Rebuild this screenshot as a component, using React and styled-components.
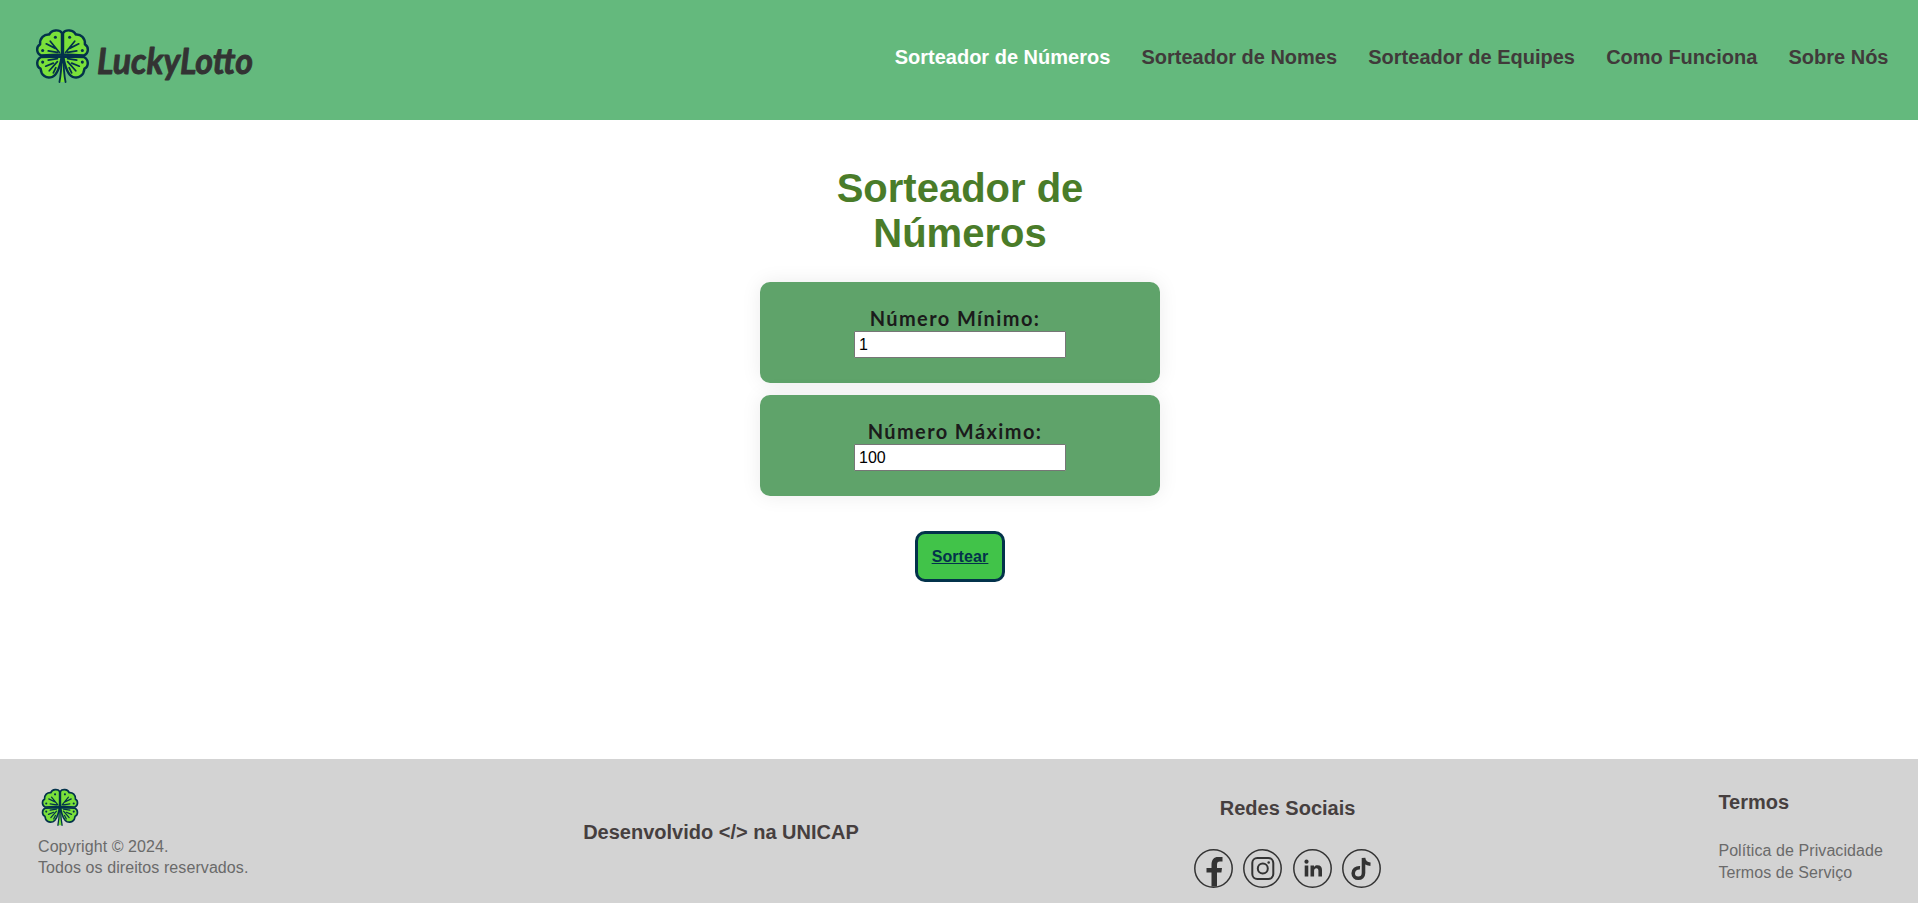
import React from "react";
import styled, { createGlobalStyle } from "styled-components";

const GlobalStyle = createGlobalStyle`
  * { box-sizing: border-box; }
  html, body { margin: 0; padding: 0; }
  body { font-family: Arial, "Liberation Sans", sans-serif; background: #fff; overflow: hidden; }
  h1, h3, p { margin: 0; }
`;

const Page = styled.div`
  display: flex;
  flex-direction: column;
  height: 903px;
`;

const Header = styled.header`
  display: flex;
  justify-content: space-between;
  height: 120px;
  flex: none;
  background: #64b97d;
  padding: 0 29.5px 0 35px;
`;

const Brand = styled.div`
  display: flex;
  align-items: flex-start;
  padding-top: 28px;
  gap: 6px;
`;

const Wordmark = styled.svg`
  display: block;
  width: 170px;
  height: 70px;
  overflow: visible;
  fill: #333;
  stroke: #333;
  stroke-width: 0.9;
  stroke-linejoin: round;
  font-family: Lato, "Liberation Sans", sans-serif;
  font-style: italic;
  font-weight: 700;
  font-size: 36px;
`;

const Nav = styled.nav`
  display: flex;
  gap: 31.2px;
  padding-top: 46px;
`;

const NavLink = styled.a`
  font-size: 20px;
  line-height: 23px;
  font-weight: 700;
  white-space: nowrap;
  color: ${(p) => (p.$active ? "#fff" : "#403a3a")};
`;

const Main = styled.main`
  flex: 1;
  display: flex;
  flex-direction: column;
  align-items: center;
  padding: 46px 0 0 2px;
`;

const Title = styled.h1`
  width: 320px;
  text-align: center;
  font-size: 40px;
  line-height: 45px;
  color: #4a7c29;
  margin-bottom: 26px;
`;

const Card = styled.section`
  width: 400px;
  height: 101px;
  margin-bottom: 12px;
  border-radius: 10px;
  background: #5fa36a;
  box-shadow: 0 0 20px rgba(0, 0, 0, 0.08);
  display: flex;
  flex-direction: column;
  align-items: center;
  padding-top: 23px;
`;

const Label = styled.label`
  font-family: Lato, sans-serif;
  font-size: 20px;
  font-weight: 700;
  line-height: 26px;
  letter-spacing: 1.4px;
  margin-right: 10px;
  color: #1b1b1b;
`;

const Field = styled.input`
  width: 212px;
  height: 27px;
  padding: 1px 4px;
  border: 1px solid #767676;
  border-radius: 1px;
  background: #fff;
  font: 16px "Liberation Sans", sans-serif;
  color: #000;
`;

const DrawButton = styled.button`
  width: 90px;
  height: 51px;
  margin-top: 23px;
  padding: 0;
  border: 3px solid #03324b;
  border-radius: 10px;
  background: #41c349;
  color: #03324b;
  font: 700 16px "Liberation Sans", sans-serif;
  letter-spacing: 0.1px;
  text-decoration: underline;
`;

const Footer = styled.footer`
  height: 144px;
  flex: none;
  background: #d3d3d3;
  display: flex;
  justify-content: space-between;
  padding: 0 35px 0 38px;
`;

const Column = styled.div`
  display: flex;
  flex-direction: column;
  align-items: ${(p) => p.$align || "flex-start"};
  padding-top: ${(p) => p.$top}px;
  margin-left: ${(p) => p.$pull || 0}px;
  margin-right: ${(p) => -(p.$pull || 0)}px;
`;

const Heading = styled.h3`
  font-size: 20px;
  line-height: 23px;
  color: #463f3f;
  white-space: nowrap;
`;

const Small = styled.p`
  font-size: 16px;
  line-height: 21.5px;
  letter-spacing: 0.08px;
  color: #6a6a6a;
  white-space: nowrap;
`;

const FooterMark = styled.div`
  padding-left: 3px;
  margin-bottom: 9.5px;
  height: 38px;
`;

const Terms = styled.div`
  padding-top: 26px;
`;

const Socials = styled.div`
  display: flex;
  gap: 10.4px;
  padding-top: 29px;
`;

const Icon = styled.svg`
  display: block;
  width: ${(p) => p.$size}px;
  height: ${(p) => p.$size}px;
`;

const upper = "M26.5 26L6 27C1 25 1 18 5 16C4.500 10 9 6 14 6.500C16 1.500 24 1 26.500 5Z";
const lower = "M26.5 28L6 28.500C1 31 1 38 5.500 40C6 46.500 11 50 17 48C22 46 24.500 38 26.500 28Z";

function Half() {
  return (
    <g>
      <path d={upper} fill="#7ae03a" />
      <path d={lower} fill="#7ae03a" />
      <g strokeWidth="1.7" fill="none">
        <path d="M24 24L15 13M20 20L11 15.500M22 24L13 22.500M22 30L13 31.500M18 34.500L10.500 37.500M22 33L14 42M20.500 39L18 44" />
      </g>
      <g fill="#03324b" stroke="none">
        <circle cx="20" cy="9" r="1.500" />
        <circle cx="7.500" cy="22" r="1.500" />
        <circle cx="7.500" cy="33.500" r="1.500" />
      </g>
    </g>
  );
}

function Clover({ size }) {
  return (
    <Icon $size={size} viewBox="0 0 54 54" stroke="#03324b" strokeWidth="2.4" strokeLinecap="round" strokeLinejoin="round">
      <Half />
      <g transform="translate(54 0) scale(-1 1)"><Half /></g>
      <path d="M25.5 30C26 40 25 47 24 53H30C29 47 28 40 28.5 30Z" fill="#7ae03a" stroke="none" />
      <path d="M27 5V34M26 30Q26 43 24 53M28 30Q28 43 30 53" fill="none" strokeWidth="1.8" />
    </Icon>
  );
}

function Social({ children }) {
  return (
    <Icon $size={39} viewBox="0 0 39 39" fill="none" stroke="#333">
      <circle cx="19.5" cy="19.5" r="18.7" strokeWidth="1.5" />
      {children}
    </Icon>
  );
}

const links = ["Sorteador de Números", "Sorteador de Nomes", "Sorteador de Equipes", "Como Funciona", "Sobre Nós"];

export default function App() {
  return (
    <Page>
      <GlobalStyle />
      <Header>
        <Brand>
          <Clover size={55} />
          <Wordmark viewBox="0 0 170 70">
            <text x="1" y="46" textLength="156" lengthAdjust="spacingAndGlyphs">LuckyLotto</text>
          </Wordmark>
        </Brand>
        <Nav>
          {links.map((l, i) => <NavLink key={l} $active={i === 0}>{l}</NavLink>)}
        </Nav>
      </Header>
      <Main>
        <Title>Sorteador de Números</Title>
        <Card>
          <Label>Número Mínimo:</Label>
          <Field defaultValue="1" />
        </Card>
        <Card>
          <Label>Número Máximo:</Label>
          <Field defaultValue="100" />
        </Card>
        <DrawButton>Sortear</DrawButton>
      </Main>
      <Footer>
        <Column $top={29}>
          <FooterMark><Clover size={38} /></FooterMark>
          <Small>Copyright © 2024.</Small>
          <Small>Todos os direitos reservados.</Small>
        </Column>
        <Column $top={62} $pull={-1}><Heading>Desenvolvido &lt;/&gt; na UNICAP</Heading></Column>
        <Column $top={38} $align="center" $pull={-1.5}>
          <Heading>Redes Sociais</Heading>
          <Socials>
            <Social>
              <path d="M17.500 37.500V23.500H12.500V19H17.500V16C17.500 10.500 20 8 24 8H28.500V12.500H26C23.800 12.500 23 13.500 23 16V19H28L27.400 23.500H23V37.500Z" fill="#333" stroke="none" />
            </Social>
            <Social>
              <rect x="9.3" y="9" width="21" height="21" rx="5" strokeWidth="2" />
              <circle cx="19.8" cy="19.5" r="5" strokeWidth="2" />
              <circle cx="25.7" cy="13.5" r="1.3" fill="#333" stroke="none" />
            </Social>
            <Social>
              <g fill="#333" stroke="none">
                <circle cx="13.500" cy="12.700" r="2.100" />
                <path d="M11.700 16.500H15.300V27.500H11.700ZM17.500 16.500H21V18C22 16.600 23 16.200 24.500 16.200C27.500 16.200 29 18 29 21V27.500H25.400V21.800C25.400 20.200 24.800 19.300 23.400 19.300C22 19.300 21.100 20.200 21.100 21.800V27.500H17.500Z" />
              </g>
            </Social>
            <Social>
              <path d="M18 18.8C14 18.5 11.2 21 11.2 24.3C11.2 27.4 13.4 29.3 16.2 29.3C19.3 29.3 21.5 27.3 21.5 24V9C22 12.5 24.5 15 28.5 15.2" strokeWidth="3.6" />
            </Social>
          </Socials>
        </Column>
        <Column $top={32}>
          <Heading>Termos</Heading>
          <Terms>
            <Small>Política de Privacidade</Small>
            <Small>Termos de Serviço</Small>
          </Terms>
        </Column>
      </Footer>
    </Page>
  );
}
